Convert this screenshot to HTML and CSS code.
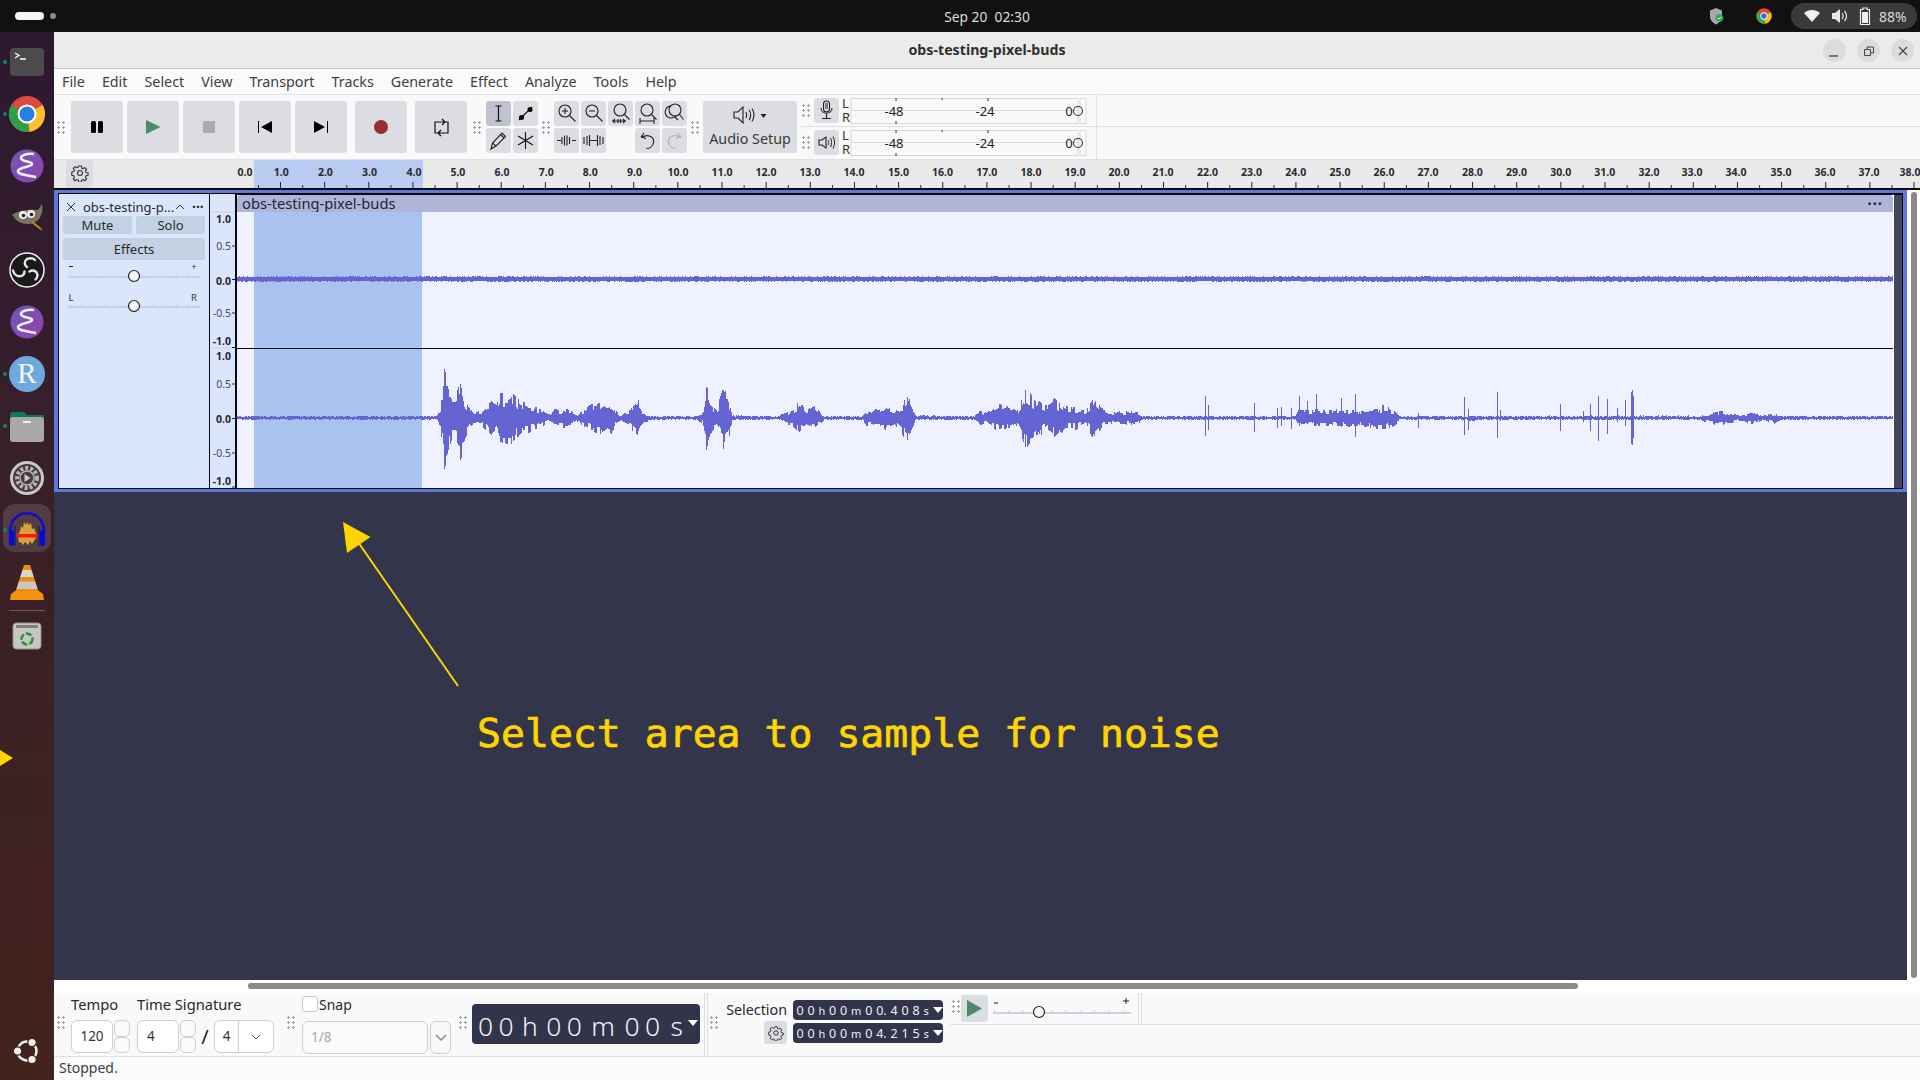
FILE: index.html
```html
<!DOCTYPE html>
<html lang="en">
<head>
<meta charset="utf-8">
<title>obs-testing-pixel-buds</title>
<link rel="stylesheet" href="styles.css">
</head>
<body>
<header class="topbar">
  <div class="activities"><span class="pill"></span><span class="adot"></span></div>
  <div class="topmain">
    <span></span>
    <div class="clock">Sep 20&nbsp; 02:30</div>
    <div class="tray">
      <svg class="tray-shield" width="20" height="20" viewBox="0 0 20 20"><path d="M10 2l6 2.500v5.500c0 4-2.500 6.500-6 8.500-3.500-2-6-4.500-6-8.500V4.500z" fill="#a8a8a8"/><circle cx="13.500" cy="12" r="3.800" fill="#2fae4e"/><path d="M11.800 12l1.200 1.100 2-2" stroke="#fff" fill="none"/></svg>
      <svg class="tray-chrome" width="16" height="16" viewBox="0 0 44 44"><circle cx="22" cy="22" r="21" fill="#ea4335"/><path d="M22 22L3.800 11.500A21 21 0 0 0 25 42.800z" fill="#34a853"/><path d="M22 22L25 42.800A21 21 0 0 0 40.200 11.500z" fill="#fbbc04"/><circle cx="22" cy="22" r="10" fill="#fff"/><circle cx="22" cy="22" r="7.500" fill="#1a73e8"/></svg>
      <div class="sys">
        <svg width="18" height="16" viewBox="0 0 18 16"><path d="M1 5c4-4 12-4 16 0l-8 9z" fill="#f2f2f2"/></svg>
        <svg width="18" height="16" viewBox="0 0 18 16"><path d="M1 5h3l5-4v14l-5-4H1z" fill="#e8e8e8"/><path d="M11 5c1.500 2 1.500 4 0 6M13.500 3c2.500 3 2.500 7 0 10" stroke="#e8e8e8" fill="none" stroke-width="1.200"/></svg>
        <svg width="12" height="18" viewBox="0 0 12 18"><path d="M4 1h4v1.500h2.500v15h-9v-15H4z" fill="none" stroke="#eee" stroke-width="1.200"/><rect x="3" y="5" width="6" height="11" fill="#eee"/></svg>
        <span class="pct">88%</span>
      </div>
    </div>
  </div>
</header>

<div class="desk">
  <nav class="dock">
    <div class="slot"><i class="run"></i><svg width="44" height="44" viewBox="0 0 44 44"><rect x="5" y="8" width="34" height="28" rx="4" fill="#4b4b4b"/><path d="M10 13l4 2.500-4 2.500M15 19h6" stroke="#fff" stroke-width="1.300" fill="none"/></svg></div>
    <div class="slot"><i class="run"></i><svg width="44" height="44" viewBox="0 0 44 44"><circle cx="22" cy="22" r="18" fill="#dd4b3e"/><path d="M22 22L6.400 13A18 18 0 0 0 24.500 39.800z" fill="#2f9e4c"/><path d="M22 22L24.500 39.800A18 18 0 0 0 37.600 13z" fill="#fbc02d"/><circle cx="22" cy="22" r="9.500" fill="#fff"/><circle cx="22" cy="22" r="7.500" fill="#2a7de1"/></svg></div>
    <div class="slot"><svg width="44" height="44" viewBox="0 0 44 44"><defs><linearGradient id="em" x1="0" y1="0" x2="1" y2="1"><stop offset="0" stop-color="#6a5bb5"/><stop offset="1" stop-color="#9440b0"/></linearGradient></defs><circle cx="22" cy="22" r="16.500" fill="url(#em)"/><path d="M29 10c-6-1-13 1-13 4 0 4 11 3 11 6 0 3-13 3-14 7 0 4 9 4 18 6" fill="none" stroke="#f4eefa" stroke-width="2.600"/></svg></div>
    <div class="slot"><svg width="44" height="44" viewBox="0 0 44 44"><path d="M7 19c6-5 18-6 26-5l4-6c1 6 0 11-3 15-5 6-14 6-20 3-3-2-5-4-7-7z" fill="#7c7462"/><circle cx="6" cy="23" r="3.500" fill="#222"/><circle cx="18" cy="19" r="4" fill="#eee"/><circle cx="18.500" cy="19.500" r="1.800" fill="#222"/><circle cx="26" cy="18" r="4" fill="#eee"/><circle cx="26.500" cy="18.500" r="1.800" fill="#222"/><path d="M27 26l10 8" stroke="#c58a2d" stroke-width="1.800"/><path d="M36 33l3 3" stroke="#333" stroke-width="1.500"/></svg></div>
    <div class="slot"><svg width="44" height="44" viewBox="0 0 44 44"><circle cx="22" cy="22" r="17" fill="#1a1a1d" stroke="#f2f2f2" stroke-width="1.500"/><g fill="none" stroke="#e6e6e6" stroke-width="2.400" stroke-linecap="round"><path d="M22 19c-3-2-3-6 0-8 3-1 6-1 8 1"/><path d="M24.500 23.500c3-2 7-1 8 3 0 2-1 4-2 5"/><path d="M19.500 23.500c0 4-4 6-8 4-2-1-3-3-3.500-5"/></g></svg></div>
    <div class="slot"><svg width="44" height="44" viewBox="0 0 44 44"><circle cx="22" cy="22" r="16.500" fill="url(#em)"/><path d="M29 10c-6-1-13 1-13 4 0 4 11 3 11 6 0 3-13 3-14 7 0 4 9 4 18 6" fill="none" stroke="#f4eefa" stroke-width="2.600"/></svg></div>
    <div class="slot"><i class="run"></i><div class="r-icon">R</div></div>
    <div class="slot"><i class="run"></i><svg class="files" width="44" height="44" viewBox="0 0 44 44"><path d="M5 12a3 3 0 0 1 3-3h11l3 3h15a2 2 0 0 1 2 2v6H5z" fill="#0d7b55"/><rect x="5" y="14" width="34" height="25" rx="3" fill="#a9a9a9"/><rect x="18" y="18" width="8" height="2" fill="#eee"/></svg></div>
    <div class="slot"><svg width="44" height="44" viewBox="0 0 44 44"><circle cx="22" cy="22" r="15.500" fill="#4a3a3d" stroke="#c9c9c9" stroke-width="3"/><circle cx="22" cy="22" r="10" fill="none" stroke="#b5b5b5" stroke-width="4" stroke-dasharray="3 2"/><circle cx="22" cy="22" r="7" fill="#4a3a3d" stroke="#b5b5b5" stroke-width="1.500"/><path d="M19.500 18l6 4-6 4z" fill="#c9c9c9"/></svg></div>
    <div class="slot slot-active"><i class="run"></i><svg width="44" height="44" viewBox="0 0 44 44"><path d="M5 24C5 -1 39 -1 39 24" fill="none" stroke="#1010c8" stroke-width="2.600"/><rect x="4" y="22" width="5" height="16" rx="2.500" fill="#0a0ad8"/><rect x="35" y="22" width="5" height="16" rx="2.500" fill="#0a0ad8"/><rect x="9" y="18" width="2" height="20" fill="#222a66"/><rect x="33" y="18" width="2" height="20" fill="#222a66"/><path d="M13 27l2-4 1-5 2 2 1-6 2 3 1-3 2 3 2-2 1 6 2-1 2 5v5l-2 3-2 3-2-3-2 4-3-3-2 3-2-3-2 1z" fill="#d9a13a"/><path d="M11 26h22v3.500H11z" fill="#f01a10"/></svg></div>
    <div class="slot"><svg width="44" height="44" viewBox="0 0 44 44"><path d="M19 5h6l9 28H10z" fill="#f08d0c"/><path d="M17.600 10h8.800l2.200 7H15.400z" fill="#d4d6d8"/><path d="M14 21.500h16l2.500 7.500h-21z" fill="#c4c7ca"/><path d="M10 31h24l4 3 1 6H5l1-6z" fill="#f29310"/></svg></div>
    <div class="docksep"></div>
    <div class="slot"><svg width="44" height="44" viewBox="0 0 44 44"><rect x="8" y="8" width="28" height="26" rx="3" fill="#c6c6c4" stroke="#8c8c8c"/><rect x="11" y="10" width="22" height="3" fill="#7f7f7f"/><circle cx="22" cy="24" r="5.500" fill="none" stroke="#2e9134" stroke-width="2.500" stroke-dasharray="6 2"/></svg></div>
    <div class="dock-fill"></div>
    <div class="slot slot-bottom"><svg width="30" height="30" viewBox="0 0 30 30"><circle cx="15" cy="15" r="9.500" fill="none" stroke="#f2f2f2" stroke-width="2.400"/><circle cx="5.500" cy="15" r="4.200" fill="#f2f2f2" stroke="#41231c" stroke-width="1.200"/><circle cx="20" cy="6.500" r="4.200" fill="#f2f2f2" stroke="#41231c" stroke-width="1.200"/><circle cx="20" cy="23.500" r="4.200" fill="#f2f2f2" stroke="#41231c" stroke-width="1.200"/></svg></div>
  </nav>

  <main class="window">
    <div class="titlebar">
      <span class="title">obs-testing-pixel-buds</span>
      <div class="winbtns">
        <button class="wb"><svg width="12" height="12" viewBox="0 0 12 12"><path d="M0 11h9" stroke="#333" stroke-width="1.200"/></svg></button>
        <button class="wb"><svg width="12" height="12" viewBox="0 0 12 12"><path d="M1.500 4.500h6v6h-6zM4 4.500V2h6.500v6H7.500" fill="none" stroke="#444"/></svg></button>
        <button class="wb"><svg width="12" height="12" viewBox="0 0 12 12"><path d="M2 2l8 8M10 2l-8 8" stroke="#444" stroke-width="1.100"/></svg></button>
      </div>
    </div>
    <div class="menubar">
      <span>File</span><span>Edit</span><span>Select</span><span>View</span><span>Transport</span><span>Tracks</span><span>Generate</span><span>Effect</span><span>Analyze</span><span>Tools</span><span>Help</span>
    </div>

    <div class="toolbar">
      <div class="grip g-first"></div>
      <div class="transport">
        <button class="tbtn"><svg viewBox="0 0 52 52"><rect x="20" y="20" width="5" height="12" rx="1.500"/><rect x="27" y="20" width="5" height="12" rx="1.500"/></svg></button>
        <button class="tbtn"><svg viewBox="0 0 52 52"><path d="M19 19l14.500 7L19 33z" fill="#4c8a69"/></svg></button>
        <button class="tbtn"><svg viewBox="0 0 52 52"><rect x="20" y="20" width="12" height="12" fill="#a8abb6"/></svg></button>
        <button class="tbtn"><svg viewBox="0 0 52 52"><path d="M19 20h1v12h-1zM33 20v12l-11-6z"/></svg></button>
        <button class="tbtn"><svg viewBox="0 0 52 52"><path d="M19 20v12l11-6zM32 20h1v12h-1z"/></svg></button>
        <button class="tbtn tbtn-gap"><svg viewBox="0 0 52 52"><circle cx="26" cy="26" r="7" fill="#943030"/></svg></button>
        <button class="tbtn tbtn-gap"><svg viewBox="0 0 52 52"><path d="M29 21H20v11h3M23 32h10V21h-3M27 18l3 3-3 3M26 29l-3 3 3 3" fill="none" stroke="#111" stroke-width="1.200"/></svg></button>
      </div>
      <div class="grip g-tools"></div>
      <div class="toolgrid">
        <button class="sbtn sbtn-on"><svg viewBox="0 0 25 25"><path d="M9.500 5h6M9.500 20h6M12.500 5v15" stroke="#111" stroke-width="1.200" fill="none"/></svg></button>
        <button class="sbtn"><svg viewBox="0 0 25 25"><path d="M6 19L19 6" stroke="#111" stroke-width="1.300"/><circle cx="8.500" cy="16.500" r="2.500"/><circle cx="17" cy="8.500" r="2.500"/></svg></button>
        <button class="sbtn"><svg viewBox="0 0 25 25"><path d="M5 21l1.500-6L16 5l3.500 3.500L10 18zM6.500 15l3.500 3M14.500 6.500l3.500 3.500" fill="none" stroke="#222" stroke-width="1.100"/></svg></button>
        <button class="sbtn"><svg viewBox="0 0 25 25"><path d="M12.500 4v17M5 8l15 9M20 8L5 17" stroke="#111" stroke-width="1.100"/></svg></button>
      </div>
      <div class="grip g-tools2"></div>
      <div class="zoomgrid">
        <button class="sbtn"><svg viewBox="0 0 25 25"><g fill="none" stroke="#222" stroke-width="1.100"><circle cx="11" cy="10" r="6"/><path d="M15.500 14.500l6 6M8 10h6M11 7v6"/></g></svg></button>
        <button class="sbtn"><svg viewBox="0 0 25 25"><g fill="none" stroke="#222" stroke-width="1.100"><circle cx="11" cy="10" r="6"/><path d="M15.500 14.500l6 6M8 10h6"/></g></svg></button>
        <button class="sbtn"><svg viewBox="0 0 25 25"><g fill="none" stroke="#222" stroke-width="1.100"><circle cx="12" cy="9" r="6"/><path d="M16.500 13.500l5 5M4 20h14M7 18l-2 2 2 2M15 18l2 2-2 2M10 18v4M12.500 18v4"/></g></svg></button>
        <button class="sbtn"><svg viewBox="0 0 25 25"><g fill="none" stroke="#222" stroke-width="1.100"><circle cx="12" cy="9" r="6"/><path d="M16.500 13.500l5 5M5 20h14M5 17v6M19 17v6"/></g></svg></button>
        <button class="sbtn"><svg viewBox="0 0 25 25"><g fill="none" stroke="#222" stroke-width="1.100"><circle cx="13" cy="9" r="6"/><path d="M9 5a6 6 0 1 0 5 9.500M17.500 13.500l4 5M13 16l3 3"/></g></svg></button>
        <button class="sbtn"><svg viewBox="0 0 25 25"><path d="M3 12.500h4M18 12.500h4M8 9v7M10.500 7.500v10M13 7.500v10M15.500 9v7" stroke="#222" stroke-width="1.100" fill="none"/></svg></button>
        <button class="sbtn"><svg viewBox="0 0 25 25"><path d="M6 8v9M8.500 7v11M16.500 7v11M19 8v9M9 12.500h7M3 9v7M22 9v7" stroke="#222" stroke-width="1.100" fill="none"/></svg></button>
        <span></span>
        <button class="sbtn"><svg viewBox="0 0 25 25"><path d="M6 9l3-4M6 9l5 1.500M6.500 9.500c6-4 13-1 12 5-.7 4-4 6-7 6" fill="none" stroke="#222" stroke-width="1.200"/></svg></button>
        <button class="sbtn sbtn-off"><svg viewBox="0 0 25 25"><path d="M19 9l-3-4M19 9l-5 1.500M18.500 9.500c-6-4-13-1-12 5 .7 4 4 6 7 6" fill="none" stroke="#b0b2ba" stroke-width="1.200"/></svg></button>
      </div>
      <div class="grip g-tools2"></div>
      <button class="audio">
        <svg width="34" height="22" viewBox="0 0 34 22"><path d="M1 8h4l5-5v16l-5-5H1z" fill="none" stroke="#222" stroke-width="1.100"/><path d="M13 8c1 2 1 4 0 6M16 6c2 3 2 7 0 10M19 4.500c2.500 4 2.500 9 0 13" fill="none" stroke="#222" stroke-width="1.100"/><path d="M27.500 10h6l-3 4z" fill="#222"/></svg>
        <span>Audio Setup</span>
      </button>
      <div class="meters">
        <div class="meter-row">
          <div class="grip g-m"></div>
          <button class="mbtn"><svg viewBox="0 0 25 25"><rect x="9.500" y="3" width="6" height="11" rx="3" fill="none" stroke="#222" stroke-width="1.100"/><path d="M7 10c0 7 11 7 11 0M12.500 16v4M8 20.500h9M11 6h3M11 8h3M11 10h3" fill="none" stroke="#222" stroke-width="1.100"/></svg></button>
          <svg class="meter" viewBox="0 0 252 32"><text class="lr" x="0" y="13">L</text><text class="lr" x="0" y="27">R</text><path d="M9 3.500h227M9 15.500h227M9 28.500h227M9 3v26M236 3v26M238 3.500h6v25h-6z" class="mline"/><path d="M54 3v3M100 3v2M146 3v3M54 29v-3" class="mtick"/><text class="mt" x="52" y="21" text-anchor="middle">-48</text><text class="mt" x="143" y="21" text-anchor="middle">-24</text><text class="mt" x="227" y="21" text-anchor="middle">0</text><circle cx="236" cy="16" r="4.500" fill="none" stroke="#333" stroke-width="1.100"/></svg>
        </div>
        <div class="meter-row">
          <div class="grip g-m"></div>
          <button class="mbtn"><svg viewBox="0 0 25 25"><path d="M5 10h3l4-3v11l-4-3H5z" fill="none" stroke="#222" stroke-width="1.100"/><path d="M14 10c1 2 1 3 0 5M16.500 8c1.500 3 1.500 6 0 9M19 6.500c2 4 2 8 0 12" fill="none" stroke="#222" stroke-width="1"/></svg></button>
          <svg class="meter" viewBox="0 0 252 32"><text class="lr" x="0" y="13">L</text><text class="lr" x="0" y="27">R</text><path d="M9 3.500h227M9 15.500h227M9 28.500h227M9 3v26M236 3v26M238 3.500h6v25h-6z" class="mline"/><path d="M54 3v3M100 3v2M146 3v3M54 29v-3" class="mtick"/><text class="mt" x="52" y="21" text-anchor="middle">-48</text><text class="mt" x="143" y="21" text-anchor="middle">-24</text><text class="mt" x="227" y="21" text-anchor="middle">0</text><circle cx="236" cy="16" r="4.500" fill="none" stroke="#333" stroke-width="1.100"/></svg>
        </div>
      </div>
    </div>

    <div class="rulerbar">
      <button class="gear"><svg width="18" height="18" viewBox="0 0 18 18"><g fill="none" stroke="#333" stroke-width="1.100"><circle cx="9" cy="9" r="2.500"/><path d="M7.700 2h2.600l.4 2 1.400.6 1.800-1 1.700 1.800-1.100 1.700.6 1.500 2 .4v2.300l-2 .4-.6 1.500 1.100 1.700-1.800 1.800-1.700-1.100-1.500.6-.4 2H7.700l-.4-2-1.500-.6-1.700 1.100-1.800-1.800 1.100-1.700-.6-1.500-2-.4V8l2-.4.6-1.500-1.100-1.700 1.800-1.800 1.700 1.100 1.500-.6z"/></g></svg></button>
      <svg class="timeline" viewBox="93 1 1827 28" preserveAspectRatio="none">
        <rect x="254" y="0" width="169" height="29" fill="#b9cbf1"/>
        <line x1="280" y1="26" x2="1920" y2="26" stroke="#222" stroke-width="6" stroke-dasharray="1 43.150"/>
        <line x1="258" y1="27.500" x2="1920" y2="27.500" stroke="#333" stroke-width="3" stroke-dasharray="1 43.150"/>
        <g class="rt">
          <text x="245" y="17">0.0</text><text x="281.300" y="17">1.0</text><text x="325.400" y="17">2.0</text><text x="369.600" y="17">3.0</text><text x="414" y="17">4.0</text><text x="457.900" y="17">5.0</text><text x="502" y="17">6.0</text><text x="546.200" y="17">7.0</text><text x="590.300" y="17">8.0</text><text x="634.500" y="17">9.0</text><text x="678" y="17">10.0</text><text x="722" y="17">11.0</text><text x="766" y="17">12.0</text><text x="810" y="17">13.0</text><text x="854" y="17">14.0</text><text x="898.500" y="17">15.0</text><text x="942.600" y="17">16.0</text><text x="986.700" y="17">17.0</text><text x="1031" y="17">18.0</text><text x="1075" y="17">19.0</text><text x="1119" y="17">20.0</text><text x="1163" y="17">21.0</text><text x="1207.500" y="17">22.0</text><text x="1251.600" y="17">23.0</text><text x="1295.800" y="17">24.0</text><text x="1340" y="17">25.0</text><text x="1384" y="17">26.0</text><text x="1428" y="17">27.0</text><text x="1472.400" y="17">28.0</text><text x="1516.500" y="17">29.0</text><text x="1560.700" y="17">30.0</text><text x="1604.800" y="17">31.0</text><text x="1649" y="17">32.0</text><text x="1692" y="17">33.0</text><text x="1736" y="17">34.0</text><text x="1781" y="17">35.0</text><text x="1825" y="17">36.0</text><text x="1869" y="17">37.0</text><text x="1910" y="17">38.0</text>
        </g>
      </svg>
    </div>

    <div class="workspace">
      <div class="stage">
        <section class="track">
          <div class="track-inner">
            <aside class="ctrl">
              <div class="ctrl-head">
                <svg width="14" height="14" viewBox="0 0 14 14"><path d="M3 3l8 8M11 3l-8 8" stroke="#333" stroke-width="1"/></svg>
                <span class="tname">obs-testing-p...</span>
                <svg width="12" height="10" viewBox="0 0 12 10"><path d="M2 7l4-4 4 4" fill="none" stroke="#333"/></svg>
                <span class="tdots">···</span>
              </div>
              <div class="ms"><button class="cbtn">Mute</button><button class="cbtn">Solo</button></div>
              <button class="cbtn cbtn-fx">Effects</button>
              <svg class="csl" width="142" height="50" viewBox="0 0 142 50">
                <path d="M6 4.500h4" stroke="#222"/><text class="cs" x="131" y="8" text-anchor="middle">+</text>
                <rect x="6" y="14" width="131" height="2" fill="#c6d2e2"/><line x1="6" y1="14" x2="137" y2="14" stroke="#c6d2e2" stroke-width="4" stroke-dasharray="1 10.900"/>
                <circle cx="71" cy="14" r="5.500" fill="#f4f4f4" stroke="#222" stroke-width="1.200"/>
                <text class="cs" x="8" y="39" text-anchor="middle">L</text><text class="cs" x="131" y="39" text-anchor="middle">R</text>
                <rect x="6" y="44" width="131" height="2" fill="#c6d2e2"/><line x1="6" y1="44" x2="137" y2="44" stroke="#c6d2e2" stroke-width="4" stroke-dasharray="1 10.900"/>
                <circle cx="71" cy="44" r="5.500" fill="#f4f4f4" stroke="#222" stroke-width="1.200"/>
              </svg>
            </aside>
            <div class="vruler">
              <svg width="25" height="294" viewBox="0 194 25 294">
                <path d="M0 212h25M0 348h25" stroke="#c8d0e2"/>
                <path d="M22 246h3M22 279.500h3M22 313h3M22 347.500h3M22 384h3M22 418.500h3M22 453h3M22 487h3" stroke="#222"/>
                <g class="vt"><text class="b" x="21" y="223">1.0</text><text x="21" y="250">0.5</text><text class="b" x="21" y="285">0.0</text><text x="21" y="317">-0.5</text><text class="b" x="21" y="345">-1.0</text><text class="b" x="21" y="360">1.0</text><text x="21" y="388">0.5</text><text class="b" x="21" y="423">0.0</text><text x="21" y="457">-0.5</text><text class="b" x="21" y="485">-1.0</text></g>
              </svg>
            </div>
            <div class="wave">
              <div class="clip-title"><span>obs-testing-pixel-buds</span><span class="clip-dots">•••</span></div>
              <div class="channel ch-top"><div class="sel"></div><canvas id="c1" width="1656" height="136"></canvas></div>
              <div class="channel ch-bot"><div class="sel"></div><canvas id="c2" width="1656" height="139"></canvas></div>
            </div>
            <div class="tail"></div>
          </div>
        </section>
        <svg class="note-arrow" width="140" height="180" viewBox="340 515 140 180"><path d="M358 542L458 686" stroke="#ffd400" stroke-width="2"/><path d="M343 522l27.500 15L347 553z" fill="#ffd400"/></svg>
        <p class="note">Select area to sample for noise</p>
      </div>
      <div class="vscroll"><div class="vthumb"></div></div>
    </div>

    <div class="hscroll"><div class="hthumb"></div></div>

    <div class="bottombar">
      <div class="grip g-b1"></div>
      <div class="bcol b-tempo">
        <label class="blabel">Tempo</label>
        <div class="numwrap"><span class="numbox">120</span><span class="spin"><i></i><i></i></span></div>
      </div>
      <div class="bcol b-sig">
        <label class="blabel">Time Signature</label>
        <div class="numwrap"><span class="numbox n4">4</span><span class="spin"><i></i><i></i></span><span class="slash">/</span>
          <span class="combo"><span class="cval">4</span><svg width="12" height="8" viewBox="0 0 12 8"><path d="M2 2l4 4 4-4" fill="none" stroke="#555"/></svg></span></div>
      </div>
      <div class="grip g-b2"></div>
      <div class="bcol b-snap">
        <label class="snapl"><span class="check"></span>Snap</label>
        <div class="numwrap"><span class="snapbox">1/8</span><span class="snapbtn"><svg width="14" height="9" viewBox="0 0 14 9"><path d="M2 2l5 5 5-5" fill="none" stroke="#888" stroke-width="1.500"/></svg></span></div>
      </div>
      <div class="grip g-b3"></div>
      <div class="bigtime"><span>00<u class="uh">h</u>00<u class="um">m</u>00<u class="us">s</u></span><b class="tcaret"></b></div>
      <div class="vsep"></div>
      <div class="grip g-b4"></div>
      <div class="selcol">
        <span class="sellabel">Selection</span>
        <button class="selgear"><svg width="16" height="16" viewBox="0 0 18 18"><g fill="none" stroke="#333" stroke-width="1.100"><circle cx="9" cy="9" r="2.500"/><path d="M7.700 2h2.600l.4 2 1.400.6 1.800-1 1.700 1.800-1.100 1.700.6 1.500 2 .4v2.300l-2 .4-.6 1.500 1.100 1.700-1.800 1.800-1.700-1.100-1.500.6-.4 2H7.700l-.4-2-1.500-.6-1.700 1.100-1.800-1.800 1.100-1.700-.6-1.500-2-.4V8l2-.4.6-1.500-1.100-1.700 1.800-1.800 1.700 1.100 1.500-.6z"/></g></svg></button>
      </div>
      <div class="seltimes">
        <div class="stime"><span>00<small>h</small>00<small>m</small>00<span class="tdot">.</span>408<small>s</small></span><b class="scaret"></b></div>
        <div class="stime"><span>00<small>h</small>00<small>m</small>04<span class="tdot">.</span>215<small>s</small></span><b class="scaret"></b></div>
      </div>
      <div class="playrow">
        <div class="grip g-b5"></div>
        <button class="pbtn"><svg width="27" height="27" viewBox="0 0 27 27"><path d="M6 5l15 8.500L6 22z" fill="#4c8a69"/></svg></button>
        <svg class="speed" width="140" height="28" viewBox="0 0 140 28"><path d="M1 10h4" stroke="#222"/><path d="M130 8h6M133 5v6" stroke="#222"/><rect x="0" y="19" width="138" height="2" fill="#c6d4e6"/><line x1="1" y1="19" x2="138" y2="19" stroke="#c6d4e6" stroke-width="4" stroke-dasharray="1 13.300"/><circle cx="46" cy="19" r="5.500" fill="#f8f8f8" stroke="#222" stroke-width="1.200"/></svg>
        <div class="vsep vsep-short"></div>
      </div>
    </div>
    <footer class="status">Stopped.</footer>
  </main>
</div>
<i class="dock-tri"></i>
<script src="wave.js"></script>
</body>
</html>
```
FILE: styles.css
```css
* { box-sizing: border-box; }
html, body { margin: 0; padding: 0; }
body { width: 1920px; height: 1080px; overflow: hidden; display: flex; flex-direction: column; font-family: "Noto Sans", sans-serif; font-size: 14px; color: #333; background: #111; position: relative; }
button { border: 0; padding: 0; margin: 0; font: inherit; color: inherit; background: none; display: block; }
svg { display: block; }

.topbar { height: 32px; flex: none; background: #111; display: grid; grid-template-columns: 54px 1fr; align-items: center; color: #ddd; }
.activities { display: flex; align-items: center; padding-left: 15px; gap: 6px; }
.pill { width: 29px; height: 8px; border-radius: 4px; background: #f4f4f4; flex: none; }
.adot { width: 6px; height: 6px; border-radius: 50%; background: #8a8a8a; flex: none; }
.topmain { display: grid; grid-template-columns: 1fr auto 1fr; align-items: center; }
.clock { font-size: 13.8px; color: #dcdcdc; }
.tray { display: flex; justify-content: flex-end; align-items: center; padding-right: 3px; }
.tray-shield { margin-right: 30px; }
.tray-chrome { margin-right: 19px; }
.sys { width: 126px; height: 26px; border-radius: 13px; background: #3a3a3a; display: flex; align-items: center; padding-left: 12px; gap: 10px; }
.pct { font-size: 14px; color: #d8dce4; margin-left: -2px; }

.desk { flex: 1; display: flex; min-height: 0; }
.dock { width: 54px; flex: none; display: flex; flex-direction: column; padding-top: 4px; background: linear-gradient(#2d1831, #38202a 40%, #42231c); }
.slot { height: 52px; flex: none; display: flex; align-items: center; justify-content: center; position: relative; }
.slot-active::before { content: ""; position: absolute; left: 3px; right: 3px; top: 0; bottom: 4px; border-radius: 12px; background: rgba(255,255,255,.13); }
.slot-active svg { position: relative; }
.files { margin-top: -3px; }
.run { position: absolute; left: 3px; top: 24px; width: 4px; height: 4px; border-radius: 50%; background: #0a8a5a; z-index: 1; }
.r-icon { width: 36px; height: 36px; border-radius: 50%; background: #6fa8dc; color: #f4f6f8; font-family: "Liberation Serif", serif; font-size: 29px; line-height: 35px; text-align: center; }
.docksep { height: 1px; margin: 2px 9px 0; background: rgba(255,255,255,.25); flex: none; }
.dock-fill { flex: 1; }
.slot-bottom { height: 58px; }
.dock-tri { position: absolute; left: 0; top: 750px; width: 0; height: 0; border-left: 13px solid #ffd400; border-top: 8px solid transparent; border-bottom: 8px solid transparent; }

.window { flex: 1; min-width: 0; display: flex; flex-direction: column; background: #fafafa; }
.titlebar { height: 37px; flex: none; background: #ebebeb; border-bottom: 1px solid #c4c4c4; padding-bottom: 2px; display: flex; align-items: center; justify-content: center; position: relative; }
.title { font-weight: 700; font-size: 14.2px; color: #303030; }
.winbtns { position: absolute; right: 6px; top: 7px; display: flex; gap: 11px; }
.wb { width: 23px; height: 23px; border-radius: 50%; background: #dcdcdc; display: flex; align-items: center; justify-content: center; }
.menubar { height: 26px; flex: none; background: #fafafa; border-bottom: 1px solid #e2e2e2; display: flex; align-items: center; gap: 17px; padding-left: 8px; color: #3f3f3f; font-size: 14.3px; }

.toolbar { height: 65px; flex: none; background: #f9f9f9; display: flex; align-items: center; border-bottom: 1px solid #e0e0e0; }
.grip { flex: none; width: 10px; height: 15px; background-image: radial-gradient(circle, #9fa2b2 1.1px, transparent 1.4px); background-size: 5px 5px; }
.g-first { margin: 0 5px 0 2px; }
.transport { display: flex; gap: 4px; }
.tbtn { width: 52px; height: 52px; border-radius: 3px; background: #dcdde2; }
.tbtn-gap { margin-left: 4px; }
.g-tools { margin: 0 4px 0 5px; }
.g-tools2 { margin: 0 3px; }
.toolgrid { display: grid; grid-template-columns: 25px 25px; grid-auto-rows: 25px; gap: 2px; }
.zoomgrid { display: grid; grid-template-columns: repeat(5, 25px); grid-auto-rows: 25px; gap: 2px; }
.sbtn { width: 25px; height: 25px; border-radius: 3px; background: #dcdde2; }
.sbtn-on { background: #c0c3cf; }
.audio { width: 94px; height: 52px; border-radius: 3px; background: #dcdde2; display: flex; flex-direction: column; align-items: center; justify-content: flex-start; padding-top: 3px; color: #3a3a3a; font-size: 14.3px; line-height: 20px; }
.audio svg { margin-bottom: 3px; }
.meters { flex: 1; align-self: stretch; display: flex; flex-direction: column; margin-left: 4px; }
.meter-row { display: flex; align-items: flex-start; }
.meter-row:first-child { height: 32px; border-bottom: 1px solid #e0e0e0; }
.g-m { margin: 8px 3px 0 0; }
.mbtn { width: 25px; height: 25px; margin-top: 3px; border-radius: 3px; background: #dcdde2; flex: none; }
.meter { width: 252px; height: 32px; margin-left: 3px; border-right: 1px solid #e2e2e2; box-sizing: content-box; padding-right: 2px; }
.lr { font-size: 13px; fill: #333; }
.mt { font-size: 13px; fill: #222; }
.mline { fill: none; stroke: #d8d8d8; }
.mtick { fill: none; stroke: #333; }

.rulerbar { height: 30px; flex: none; display: flex; background: #e9e9e9; border-bottom: 2px solid #0c0c0c; padding-left: 12px; }
.gear { width: 27px; height: 28px; padding-bottom: 2px; border-radius: 3px; background: #dcdde2; display: flex; align-items: center; justify-content: center; flex: none; }
.timeline { flex: 1; height: 28px; min-width: 0; }
.rt text { font-size: 10.5px; font-weight: 700; fill: #2a2a30; text-anchor: middle; font-family: "Noto Sans", sans-serif; }

.workspace { flex: 1; min-height: 0; display: flex; }
.stage { flex: 1; min-width: 0; background: #33364a; position: relative; }
.vscroll { width: 13px; flex: none; background: #fff; padding: 2px 3px 2px 4px; }
.vthumb { height: 100%; background: #8a8a8a; border-radius: 3px; }
.track { height: 302px; border-style: solid; border-color: #5f78db; border-width: 3px 4px; }
.track-inner { height: 100%; display: flex; border: 1px solid #0a0a0a; border-right: 0; background: #dbe6fd; }
.ctrl { width: 151px; flex: none; border-right: 1px solid #0a0a0a; padding: 3px 4px 0; display: flex; flex-direction: column; color: #2a2a2a; }
.ctrl-head { height: 19px; display: flex; align-items: center; margin-left: 1px; font-size: 13px; white-space: nowrap; }
.tname { margin: 0 0 0 5px; width: 91px; overflow: hidden; }
.tdots { margin-left: 6px; font-weight: 700; letter-spacing: 0; font-size: 14px; line-height: 10px; }
.ms { display: flex; gap: 4px; width: 142px; }
.cbtn { flex: 1; height: 18px; line-height: 18px; border-radius: 3px; background: #c3d2e2; text-align: center; font-size: 13px; color: #2a2a2a; }
.cbtn-fx { flex: none; height: 22px; line-height: 22px; margin-top: 4px; width: 142px; }
.csl { margin-top: 2px; }
.cs { font-size: 9.5px; fill: #333; }
.vruler { width: 27px; flex: none; border-right: 2px solid #0a0a0a; }
.vt text { font-size: 10.5px; text-anchor: end; fill: #444a5e; }
.vt .b { font-weight: 700; fill: #22242e; }
.wave { flex: 1; min-width: 0; display: flex; flex-direction: column; border-top: 1px solid #0a0a0a; background: #eff2fe; }
.clip-title { height: 17px; flex: none; background: #aeb5d9; border-radius: 4px 4px 0 0; padding: 0 10px 0 5px; display: flex; align-items: center; justify-content: space-between; font-size: 14.7px; color: #23243a; line-height: 17px; }
.clip-dots { font-size: 11px; letter-spacing: 1px; color: #222; }
.channel { position: relative; background: #eff2fe; overflow: hidden; }
.ch-top { height: 136px; }
.ch-bot { height: 139px; border-top: 1px solid #0a0a0a; box-sizing: content-box; }
.sel { position: absolute; left: 17px; top: 0; bottom: 0; width: 168px; background: #a9c2f0; }
.channel canvas { position: absolute; left: 0; top: 0; display: block; }
.tail { width: 10px; flex: none; background: #43465a; border-left: 1px solid #fff; border-top: 1px solid #0a0a0a; border-right: 1px solid #0a0a0a; }
.note-arrow { position: absolute; left: 286px; top: 325px; }
.note { position: absolute; left: 423px; top: 519px; margin: 0; font-family: "DejaVu Sans Mono", monospace; font-size: 39.8px; line-height: 48px; color: #ffd400; white-space: pre; -webkit-text-stroke: .7px #ffd400; }

.hscroll { height: 13px; flex: none; background: #fff; padding: 3px 0 0 194px; }
.hthumb { width: 1330px; height: 6px; border-radius: 3px; background: #8a8a8a; }
.bottombar { height: 64px; flex: none; background: #f9f9f9; border-bottom: 1px solid #e0e0e0; display: flex; align-items: flex-start; }
.bcol { display: flex; flex-direction: column; flex: none; }
.blabel { height: 27px; line-height: 22px; font-size: 14.7px; color: #2a2a2a; white-space: nowrap; }
.g-b1 { margin: 22px 5px 0 2px; }
.b-tempo { width: 66px; }
.b-sig { width: 138px; }
.numwrap { display: flex; align-items: center; }
.numbox { width: 42px; height: 33px; border: 1px solid #cfcfcf; border-radius: 6px; background: #fff; text-align: center; line-height: 31px; font-size: 13.5px; color: #333; }
.n4 { text-align: left; padding-left: 9px; }
.spin { width: 16px; height: 33px; margin-left: 1px; display: flex; flex-direction: column; }
.spin i { flex: 1; border: 1px solid #cfcfcf; border-radius: 5px; background: #fafafa; }
.slash { width: 18px; text-align: center; font-size: 20px; color: #222; }
.combo { width: 60px; height: 33px; border: 1px solid #cfcfcf; border-radius: 6px; background: #fff; display: grid; grid-template-columns: 24px 1fr; align-items: center; justify-items: center; }
.cval { width: 100%; height: 100%; line-height: 31px; text-align: center; border-right: 1px solid #cfcfcf; font-size: 13.5px; }
.g-b2 { margin: 22px 6px 0 11px; }
.b-snap { width: 149px; }
.snapl { height: 28px; display: flex; align-items: flex-start; padding-top: 3px; font-size: 14px; line-height: 18px; color: #2a2a2a; }
.check { width: 16px; height: 16px; margin: 0 1px 0 0; border: 1px solid #c8c8c8; border-radius: 3px; background: #fff; }
.snapbox { width: 126px; height: 33px; border: 1px solid #cfcfcf; border-radius: 6px; background: #fafafa; color: #a8a8a8; line-height: 31px; padding-left: 8px; font-size: 13.5px; }
.snapbtn { width: 21px; height: 33px; margin-left: 2px; border: 1px solid #cfcfcf; border-radius: 6px; display: flex; align-items: center; justify-content: center; }
.g-b3 { margin: 22px 4px 0 7px; }
.bigtime { width: 228px; height: 40px; margin-top: 11px; flex: none; border-radius: 4px; background: #31344a; color: #f2f2f2; display: flex; align-items: center; justify-content: space-between; padding: 3px 2px 0 6px; font-size: 26.5px; font-weight: 300; letter-spacing: 5.4px; white-space: nowrap; }
.bigtime u { text-decoration: none; }
.uh { padding: 0 3px; }
.um { padding: 0 4px; }
.us { padding-left: 5px; }
.tcaret { flex: none; width: 0; height: 0; margin-top: -6px; border: 5px solid transparent; border-top: 6px solid #fff; border-bottom: 0; }
.vsep { width: 4px; height: 63px; flex: none; margin-left: 4px; border-left: 1px solid #dedede; border-right: 1px solid #dedede; }
.g-b4 { margin: 22px 0 0 1px; }
.selcol { width: 68px; flex: none; display: flex; flex-direction: column; align-items: flex-end; padding-top: 7px; }
.sellabel { line-height: 20px; font-size: 14.3px; color: #2a2a2a; white-space: nowrap; }
.selgear { width: 23px; height: 23px; margin-top: 1px; border-radius: 3px; background: #dcdde2; display: flex; align-items: center; justify-content: center; }
.seltimes { width: 150px; margin: 7px 0 0 6px; flex: none; display: flex; flex-direction: column; gap: 3px; }
.stime { height: 20px; border-radius: 4px; background: #31344a; color: #f0f2f6; display: flex; align-items: center; justify-content: space-between; padding: 0 1.5px 0 3.4px; font-size: 12.5px; letter-spacing: 3.85px; white-space: nowrap; }
.stime small { font-size: 11px; }
.tdot { margin-left: -4px; }
.scaret { flex: none; width: 0; height: 0; border: 5.5px solid transparent; border-top: 6px solid #fff; border-bottom: 0; }
.playrow { flex: 1; height: 32px; margin-left: 7px; border-bottom: 1px solid #e0e0e0; display: flex; align-items: flex-start; }
.g-b5 { margin: 6px 0 0 1px; }
.pbtn { width: 27px; height: 27px; margin-top: 2px; border-radius: 3px; background: #dcdde2; flex: none; }
.speed { margin: 0 0 0 5px; flex: none; }
.vsep-short { height: 31px; margin-left: 5px; }
.status { height: 23px; flex: none; background: #fbfbfb; padding-left: 5px; font-size: 14px; line-height: 22px; color: #404040; }
```
FILE: wave.js
```js
(function () {
  var seed = 12345;
  function rnd() { seed = (seed * 1664525 + 1013904223) % 4294967296; return seed / 4294967296; }
  var env = [[237,1.5],[436,2],[440,9],[444,50],[449,30],[451,24],[456,28],[460,38],[465,22],[468,14],[473,6],[482,9],[491,18],[496,13],[500,26],[506,28],[511,30],[520,18],[527,16],[540,11],[547,4],[554,11],[567,11],[576,3],[587,13],[601,17],[606,12],[611,16],[619,4],[630,10],[637,23],[643,6],[652,2],[692,1.5],[702,5],[706,31],[710,18],[716,10],[722,30],[727,28],[732,3],[777,1.5],[786,7],[793,10],[799,17],[806,8],[815,14],[824,2],[862,2],[866,8],[889,15],[896,10],[907,25],[915,3],[973,2],[980,9],[987,6],[998,15],[1018,9],[1025,32],[1032,23],[1038,19],[1046,13],[1054,22],[1065,12],[1076,12],[1085,8],[1094,25],[1103,8],[1116,6],[1120,8],[1138,7],[1141,2],[1295,2],[1298,9],[1365,9],[1375,12],[1385,13],[1395,7],[1400,1.5],[1464,2],[1470,4],[1480,2],[1700,2.5],[1714,8],[1730,6],[1737,3],[1752,6],[1762,3],[1773,6],[1783,2],[1893,1.5]];
  var spikes = [[444,49,51],[445,46,48],[460,34,42],[461,30,40],[511,21,26],[706,31,32],[707,30,28],[723,28,31],[724,26,24],[907,21,22],[1025,28,29],[1205,22,18],[1208,13,12],[1254,15,14],[1277,10,10],[1281,11,8],[1291,10,11],[1299,22,8],[1307,17,6],[1316,24,7],[1341,20,9],[1355,24,19],[1418,5,10],[1464,21,17],[1468,9,12],[1497,26,20],[1500,8,3],[1560,14,13],[1583,7,4],[1590,14,13],[1598,22,23],[1607,19,16],[1617,10,4],[1625,18,8],[1631,26,26],[1632,28,27],[1633,22,20]];
  function envAt(x) {
    for (var i = 1; i < env.length; i++) {
      if (x <= env[i][0]) {
        var a = env[i - 1], b = env[i];
        return a[1] + (b[1] - a[1]) * (x - a[0]) / (b[0] - a[0]);
      }
    }
    return 1.5;
  }
  function draw(id, mid, ampFn) {
    var cv = document.getElementById(id), c = cv.getContext('2d');
    c.fillStyle = '#6464d2';
    for (var i = 0; i < cv.width; i++) {
      var a = ampFn(i + 237);
      var up = Math.max(1, Math.round(a[0])), dn = Math.max(1, Math.round(a[1]));
      c.fillRect(i, mid - up, 1, up + dn);
    }
  }
  draw('c1', 67, function () {
    return [2 + (rnd() > .7 ? 1 : 0), 2 + (rnd() > .6 ? 1 : 0)];
  });
  var sp = {};
  spikes.forEach(function (s) { sp[s[0]] = s; });
  var hold = 1, holdUp = 1, holdDn = 1;
  draw('c2', 69, function (x) {
    if (sp[x]) return [sp[x][1], sp[x][2]];
    var e = envAt(x);
    if (--hold <= 0) { hold = 1 + Math.floor(rnd() * 3); holdUp = .4 + rnd() * .6; holdDn = .4 + rnd() * .6; }
    if (e <= 3) return [1 + rnd() * e * .7, 1 + rnd() * e * .5];
    return [e * holdUp, e * holdDn];
  });
})();
```
